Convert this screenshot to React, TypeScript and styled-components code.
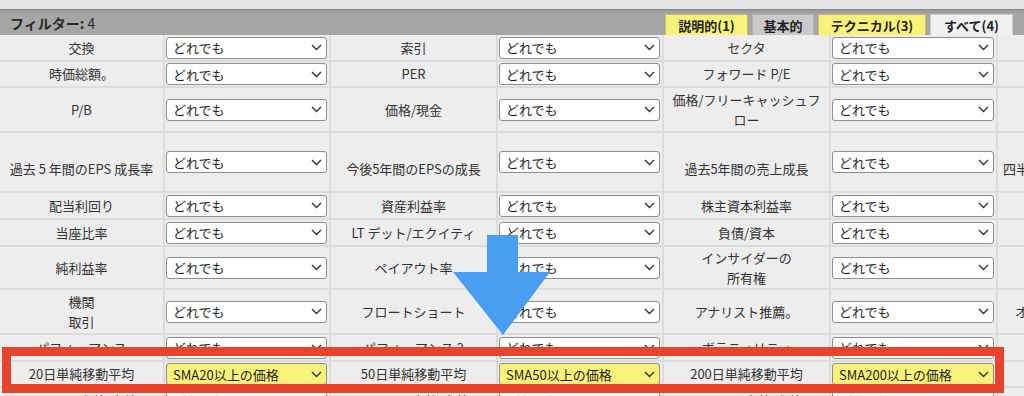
import React from "react";
import styled, { createGlobalStyle, css } from "styled-components";

type Pair = {
  label: React.ReactNode;
  value?: string;
  hit?: boolean;
};

type RowData = {
  height: number;
  drop?: number;
  pairs: Pair[];
};

const GlobalStyle = createGlobalStyle`
  html, body {
    margin: 0;
    padding: 0;
    background: #ededed;
  }
  body {
    font-family: "Noto Sans CJK JP", "Noto Sans", sans-serif;
  }
`;

const Page = styled.div`
  position: relative;
  width: 1024px;
  height: 396px;
  overflow: hidden;
  background: #ededed;
`;

const TopStrip = styled.div`
  height: 9px;
  background: #e3e3e3;
`;

const HeaderBar = styled.div`
  display: flex;
  align-items: flex-end;
  justify-content: space-between;
  height: 26px;
  box-sizing: border-box;
  padding: 0 11px 0 10px;
  border-top: 1px solid #8a8a8a;
  background: linear-gradient(#979797, #a6a6a6 4px, #a6a6a6);
`;

const Title = styled.div`
  align-self: center;
  font-size: 14px;
  font-weight: 700;
  color: #2a2a2a;

  span {
    font-weight: 400;
  }
`;

const Tabs = styled.div`
  display: flex;
  gap: 4px;
`;

const Tab = styled.div<{ $kind: "hit" | "plain" | "active"; $w: number }>`
  display: flex;
  align-items: center;
  justify-content: center;
  width: ${(p) => p.$w}px;
  height: 21px;
  box-sizing: border-box;
  border: 1px solid #b4b4b4;
  border-bottom: none;
  font-size: 13px;
  font-weight: 700;
  color: #222;
  background: #c9c9c9;
  ${(p) =>
    p.$kind === "hit" &&
    css`
      background: #f9f27a;
      border-color: #c4bf6a;
    `};
  ${(p) =>
    p.$kind === "active" &&
    css`
      background: #f1f1f1;
      border-color: #cfcfcf;
    `};
`;

const FilterTable = styled.div`
  display: flex;
  flex-direction: column;
  gap: 2px;
  background: #dcdcdc;
`;

const Row = styled.div<{ $h: number }>`
  display: grid;
  grid-template-columns: 163px 164px 165px 164px 165px 165px 1fr;
  column-gap: 2px;
  height: ${(p) => p.$h}px;
`;

const LabelCell = styled.div<{ $drop?: number }>`
  display: flex;
  align-items: center;
  justify-content: center;
  box-sizing: border-box;
  padding-top: ${(p) => p.$drop ?? 0}px;
  background: #ededed;
  font-size: 13px;
  line-height: 20px;
  color: #333;
  text-align: center;
  white-space: nowrap;
`;

const EdgeCell = styled(LabelCell)<{ $inset: number }>`
  justify-content: flex-start;
  padding-left: ${(p) => p.$inset}px;
  overflow: hidden;
`;

const SelectCell = styled.div`
  display: flex;
  align-items: center;
  padding: 0 2px 0 1px;
  background: #ededed;
`;

const SelectBox = styled.div<{ $hit?: boolean }>`
  display: flex;
  align-items: center;
  justify-content: space-between;
  width: 100%;
  height: 22px;
  box-sizing: border-box;
  padding: 0 4px 0 6px;
  border: 1px solid #8e8e8e;
  border-radius: 3px;
  background: ${(p) => (p.$hit ? "#f9f27a" : "#fff")};
  font-size: 13px;
  color: #1e1e1e;
`;

const Chevron = styled.svg`
  width: 11px;
  height: 7px;
  flex: none;
`;

const Arrow = styled.svg`
  position: absolute;
  left: 453px;
  top: 235px;
  width: 97px;
  height: 100px;
`;

const Highlight = styled.div`
  position: absolute;
  left: 2px;
  top: 347px;
  width: 1002px;
  height: 46px;
  box-sizing: border-box;
  border: 9px solid #e8432b;
`;

const ANY = "どれでも";

// the fourth label column is cut by the window edge; only its visible start is kept
const rows: (RowData & { edge?: { text: string; inset: number } })[] = [
  {
    height: 25,
    pairs: [{ label: "交換" }, { label: "索引" }, { label: "セクタ" }],
  },
  {
    height: 24,
    pairs: [{ label: "時価総額。" }, { label: "PER" }, { label: "フォワード P/E" }],
  },
  {
    height: 43,
    pairs: [
      { label: "P/B" },
      { label: "価格/現金" },
      { label: (<>価格/フリーキャッシュフ<br />ロー</>) },
    ],
  },
  {
    height: 58,
    drop: 14,
    edge: { text: "四半", inset: 5 },
    pairs: [
      { label: "過去 5 年間のEPS 成長率" },
      { label: "今後5年間のEPSの成長" },
      { label: "過去5年間の売上成長" },
    ],
  },
  {
    height: 25,
    pairs: [{ label: "配当利回り" }, { label: "資産利益率" }, { label: "株主資本利益率" }],
  },
  {
    height: 25,
    pairs: [{ label: "当座比率" }, { label: "LT デット/エクイティ" }, { label: "負債/資本" }],
  },
  {
    height: 41,
    pairs: [
      { label: "純利益率" },
      { label: "ペイアウト率" },
      { label: (<>インサイダーの<br />所有権</>) },
    ],
  },
  {
    height: 43,
    edge: { text: "オ", inset: 17 },
    pairs: [
      { label: (<>機関<br />取引</>) },
      { label: "フロートショート" },
      { label: "アナリスト推薦。" },
    ],
  },
  {
    height: 25,
    pairs: [{ label: "パフォーマンス" }, { label: "パフォーマンス 2" }, { label: "ボラティリティ" }],
  },
  {
    height: 24,
    pairs: [
      { label: "20日単純移動平均", value: "SMA20以上の価格", hit: true },
      { label: "50日単純移動平均", value: "SMA50以上の価格", hit: true },
      { label: "200日単純移動平均", value: "SMA200以上の価格", hit: true },
    ],
  },
  {
    height: 25,
    pairs: [
      { label: "20日間の高値/安値" },
      { label: "50日間の高値/安値" },
      { label: "52週間の高値/安値" },
    ],
  },
];

const Select = ({ value, hit }: { value: string; hit?: boolean }) => (
  <SelectBox $hit={hit}>
    <span>{value}</span>
    <Chevron viewBox="0 0 11 7">
      <polyline points="1,1 5.5,5.5 10,1" fill="none" stroke="#333" strokeWidth="1.4" />
    </Chevron>
  </SelectBox>
);

const App = () => {
  return (
    <Page>
      <GlobalStyle />
      <TopStrip />
      <HeaderBar>
        <Title>
          フィルター: <span>4</span>
        </Title>
        <Tabs>
          <Tab $kind="hit" $w={83}>説明的(1)</Tab>
          <Tab $kind="plain" $w={62}>基本的</Tab>
          <Tab $kind="hit" $w={108}>テクニカル(3)</Tab>
          <Tab $kind="active" $w={83}>すべて(4)</Tab>
        </Tabs>
      </HeaderBar>
      <FilterTable>
        {rows.map((row, idx) => (
          <Row key={`filter-row-${String(idx)}`} $h={row.height}>
            {row.pairs.map((pair, i) => (
              <React.Fragment key={`pair-${String(idx)}-${String(i)}`}>
                <LabelCell $drop={row.drop}>
                  <div>{pair.label}</div>
                </LabelCell>
                <SelectCell>
                  <Select value={pair.value ?? ANY} hit={pair.hit} />
                </SelectCell>
              </React.Fragment>
            ))}
            <EdgeCell $drop={row.drop} $inset={row.edge?.inset ?? 0}>
              {row.edge?.text ?? ""}
            </EdgeCell>
          </Row>
        ))}
      </FilterTable>
      <Arrow viewBox="0 0 97 100">
        <polygon points="34,0 65,0 65,37 97,37 50,100 0,37 34,37" fill="#4a9ef2" />
      </Arrow>
      <Highlight />
    </Page>
  );
};

export default App;
